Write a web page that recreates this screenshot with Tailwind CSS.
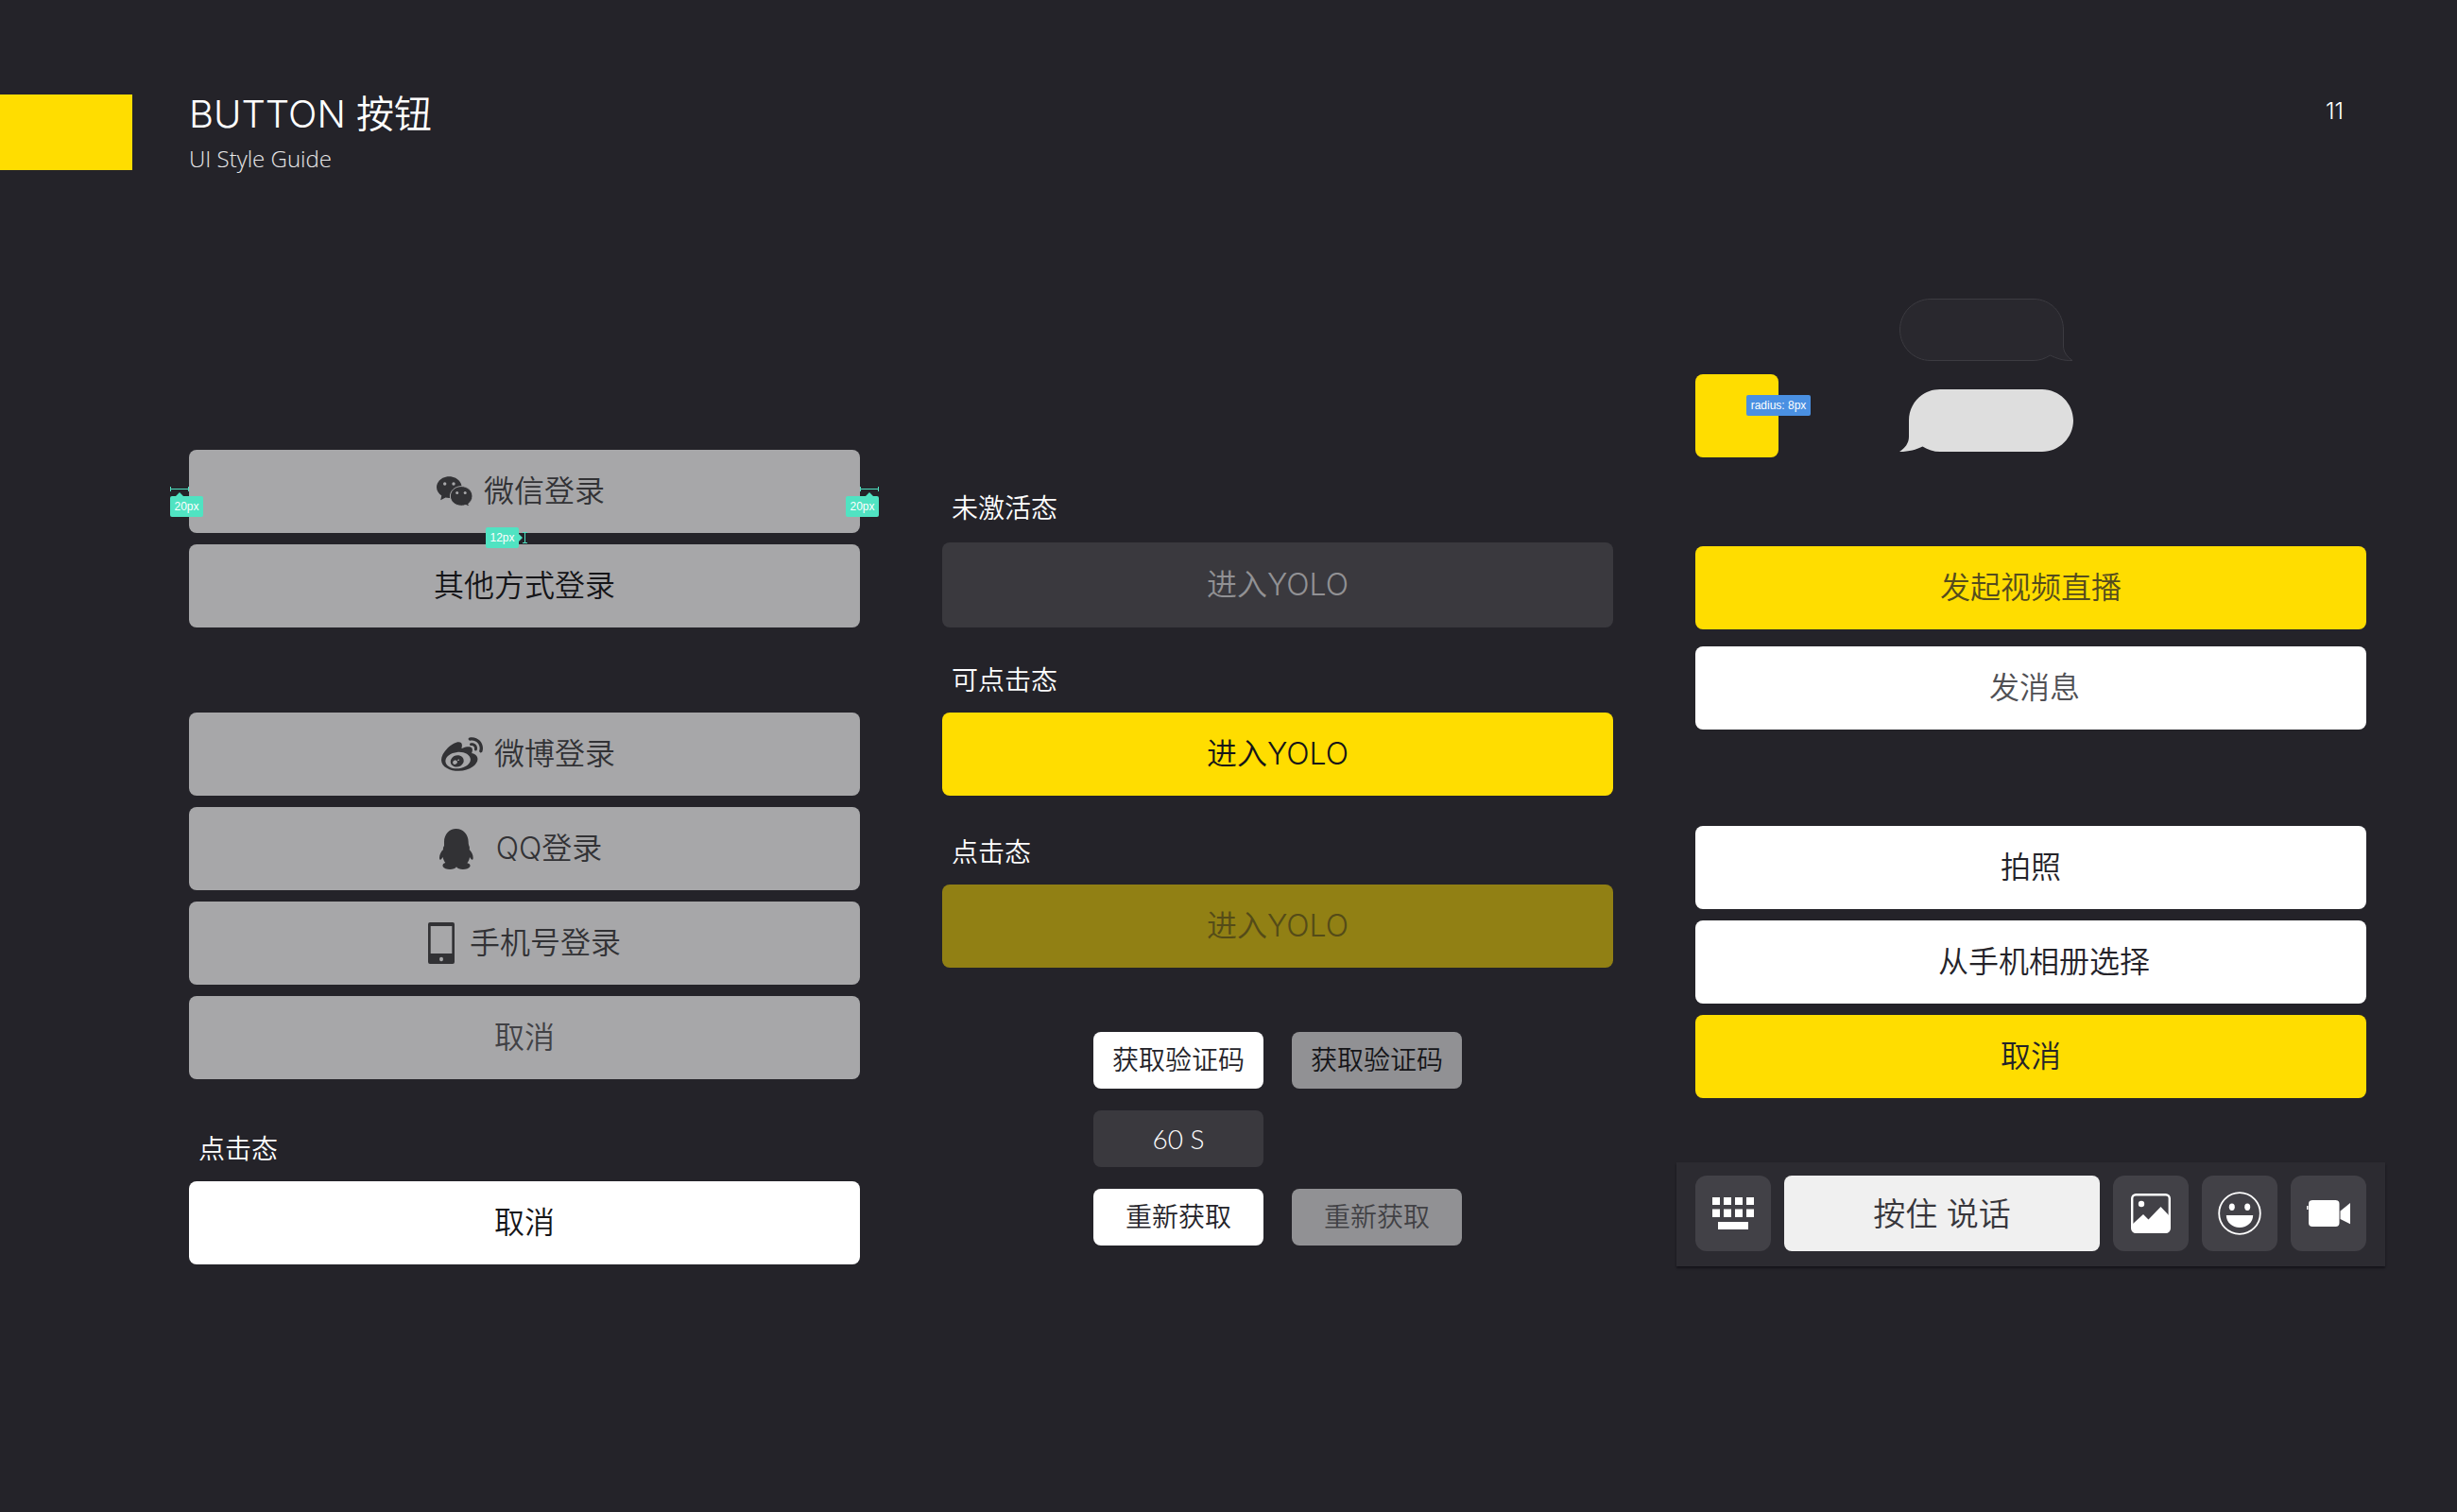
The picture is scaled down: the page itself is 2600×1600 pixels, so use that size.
<!DOCTYPE html>
<html lang="zh-CN">
<head>
<meta charset="utf-8">
<meta name="viewport" content="width=device-width, initial-scale=1">
<title>BUTTON 按钮 - UI Style Guide</title>
<script src="https://cdn.jsdelivr.net/npm/@tailwindcss/browser@4"></script>
</head>
<body class="min-h-screen bg-[#242329] font-['Inter','Noto_Sans_CJK_SC',sans-serif] font-[350] text-white">

<header class="flex items-start pt-[100px]">
  <div class="h-20 w-[140px] bg-[#ffdd00]"></div>
  <div class="ml-[60px]">
    <h1 class="text-[40px] leading-[42px]">BUTTON 按钮</h1>
    <p class="mt-[14px] font-['Open_Sans',sans-serif] text-2xl leading-6 font-light text-white/90">UI Style Guide</p>
  </div>
  <span class="mr-[120px] ml-auto text-2xl leading-9">11</span>
</header>

<main class="mt-[136px] grid grid-cols-3 items-start gap-x-[87px] pr-24 pl-[200px]">

  <!-- Login buttons -->
  <section class="pt-40 text-[32px] text-[#323235]">
    <div class="relative flex flex-col gap-3">
      <button class="flex h-[88px] w-full items-center justify-center gap-3 rounded-lg bg-[#a7a7a9] pr-2">
        <svg class="h-8 w-[38px]" viewBox="0 0 38 32" fill="currentColor" aria-hidden="true">
          <path d="M13.3 .2C20.6 .2 26.6 5.3 26.6 11.6S20.6 23 13.3 23c-1.3 0-2.600-.2-3.800-.5L4.200 25.200 5.300 20.600C2.100 18.500 0 15.300 0 11.600 0 5.300 6 .2 13.300.2z"/>
          <path d="M26.200 10.600c6.500 0 11.800 4.700 11.800 10.400 0 3.300-1.700 6.100-4.300 8l1 3-3.900-1.500c-1.400.5-3 .8-4.600.8-6.500 0-11.800-4.600-11.800-10.300s5.300-10.400 11.800-10.400z" stroke="#a7a7a9" stroke-width="1"/>
          <g fill="#a7a7a9"><circle cx="8.700" cy="8" r="1.700"/><circle cx="18" cy="8" r="1.700"/><circle cx="21.700" cy="17.500" r="1.500"/><circle cx="30.200" cy="17.500" r="1.500"/></g>
        </svg>
        微信登录
      </button>
      <button class="h-[88px] w-full rounded-lg bg-[#a7a7a9] text-[#151518]">其他方式登录</button>

      <!-- Spacing annotations -->
      <div class="absolute top-[39px] -left-5 flex w-[35px] flex-col items-start font-['Liberation_Sans',sans-serif] text-xs font-normal text-white">
        <svg class="h-[10px] w-5" viewBox="0 0 20 10" fill="none" stroke="#50e3c2" aria-hidden="true"><path d="M.5 0v5M19.500 0v5M0 2.500h20"/><path d="M6 10l4-4 4 4z" fill="#50e3c2" stroke="none"/></svg>
        <span class="h-[22px] w-full rounded-xs bg-[#50e3c2] text-center leading-[23px]">20px</span>
      </div>
      <div class="absolute top-[39px] -right-5 flex w-[35px] flex-col items-end font-['Liberation_Sans',sans-serif] text-xs font-normal text-white">
        <svg class="h-[10px] w-5" viewBox="0 0 20 10" fill="none" stroke="#50e3c2" aria-hidden="true"><path d="M.5 0v5M19.500 0v5M0 2.500h20"/><path d="M6 10l4-4 4 4z" fill="#50e3c2" stroke="none"/></svg>
        <span class="h-[22px] w-full rounded-xs bg-[#50e3c2] text-center leading-[23px]">20px</span>
      </div>
      <div class="absolute top-[82px] left-[314px] flex items-center font-['Liberation_Sans',sans-serif] text-xs font-normal text-white">
        <span class="h-[22px] w-[35px] rounded-xs bg-[#50e3c2] text-center leading-[23px]">12px</span>
        <svg class="h-3 w-[9px]" viewBox="0 0 9 12" fill="none" stroke="#50e3c2" aria-hidden="true"><path d="M4 .5h5M4 11.500h5M6.500 0v12"/><path d="M0 2l4 4-4 4z" fill="#50e3c2" stroke="none"/></svg>
      </div>
    </div>

    <div class="mt-[90px] flex flex-col gap-3">
      <button class="flex h-[88px] w-full items-center justify-center gap-3 rounded-lg bg-[#a7a7a9] pl-2">
        <svg class="h-9 w-11" viewBox="0 2.200 24 19.600" fill="currentColor" aria-hidden="true">
          <path d="M10.098 20.323c-3.977.391-7.414-1.406-7.672-4.020-.259-2.609 2.759-5.047 6.740-5.441 3.979-.394 7.413 1.404 7.671 4.018.259 2.600-2.759 5.049-6.737 5.439l-.002.004zM9.050 17.219c-.384.616-1.208.884-1.829.602-.612-.279-.793-.991-.406-1.593.379-.595 1.176-.861 1.793-.601.622.263.820.972.442 1.592zm1.270-1.627c-.141.237-.449.353-.689.253-.236-.090-.313-.361-.177-.586.138-.227.436-.346.672-.240.239.090.315.360.180.601l.014-.028zm.176-2.719c-1.893-.493-4.033.450-4.857 2.118-.836 1.704-.026 3.591 1.886 4.210 1.983.640 4.318-.341 5.132-2.179.800-1.793-.201-3.642-2.161-4.149zm7.563-1.224c-.346-.105-.570-.180-.405-.615.375-.977.420-1.804 0-2.404-.781-1.112-2.915-1.053-5.364-.030 0 0-.766.331-.571-.271.376-1.217.315-2.224-.270-2.809-1.338-1.337-4.869.045-7.888 3.080C1.309 10.870 0 13.273 0 15.348c0 3.981 5.099 6.395 10.086 6.395 6.536 0 10.888-3.801 10.888-6.820 0-1.822-1.547-2.854-2.915-3.284v.010zm1.908-5.092c-.766-.856-1.908-1.187-2.960-.962-.436.090-.706.511-.616.932.090.420.511.691.932.602.511-.105 1.067.044 1.442.465.376.421.466.977.316 1.473-.136.406.089.856.510.992.405.119.857-.105.992-.512.330-1.021.120-2.178-.646-3.035l.030.045zm2.418-2.195c-1.576-1.757-3.905-2.419-6.054-1.968-.496.104-.812.587-.706 1.081.104.496.586.813 1.082.707 1.532-.331 3.185.150 4.296 1.383 1.112 1.246 1.429 2.943.947 4.416-.165.480.106 1.007.586 1.157.479.165.991-.104 1.157-.586.675-2.088.241-4.478-1.338-6.235l.030.045z"/>
        </svg>
        微博登录
      </button>
      <button class="flex h-[88px] w-full items-center justify-center gap-6 rounded-lg bg-[#a7a7a9] pr-2">
        <svg class="h-[43px] w-9" viewBox="0 0 108 129" fill="currentColor" aria-hidden="true">
          <path d="M53 0C75 0 92 18 92 42c0 6 1 10 3 14 1 4 1 7 0 10 7 7 12 17 12 26 0 6-3 8-6 5l-5-7c-1 8-4 14-8 19 8 2 11 6 9 11-5 11-37 12-43 1-6 11-38 10-43-1-2-6 1-10 8-12-4-4-7-11-8-18l-5 7c-3 3-6 1-6-5 0-10 5-19 12-26-1-4 0-8 3-12V42C15 18 31 0 53 0z"/>
        </svg>
        QQ登录
      </button>
      <button class="flex h-[88px] w-full items-center justify-center gap-4 rounded-lg bg-[#a7a7a9]">
        <svg class="h-11 w-7" viewBox="0 0 28 44" fill="currentColor" fill-rule="evenodd" aria-hidden="true">
          <path d="M2 0h24a2 2 0 0 1 2 2v40a2 2 0 0 1-2 2H2a2 2 0 0 1-2-2V2a2 2 0 0 1 2-2zM2.700 4v29h22.600V4zM14 36.800a2 2.200 0 1 0 0 4.400 2 2.200 0 0 0 0-4.400z"/>
        </svg>
        手机号登录
      </button>
      <button class="h-[88px] w-full rounded-lg bg-[#a7a7a9] text-[#414145]">取消</button>
    </div>

    <h2 class="mt-[54px] mb-[14px] pl-[10px] text-[28px] leading-10 text-white">点击态</h2>
    <button class="h-[88px] w-full rounded-lg bg-white text-[#151518]">取消</button>
  </section>

  <!-- Enter button states and verification code -->
  <section class="pt-[202px] text-[32px]">
    <h2 class="mb-4 pl-[10px] text-[28px] leading-10">未激活态</h2>
    <button class="h-[90px] w-full rounded-lg bg-[#3a393e] text-[#919194]">进入YOLO</button>
    <h2 class="mt-9 mb-[14px] pl-[10px] text-[28px] leading-10">可点击态</h2>
    <button class="h-[88px] w-full rounded-lg bg-[#ffdd00] text-[#151518]">进入YOLO</button>
    <h2 class="mt-10 mb-[14px] pl-[10px] text-[28px] leading-10">点击态</h2>
    <button class="h-[88px] w-full rounded-lg bg-[#918014] text-[#544b18]">进入YOLO</button>

    <div class="mt-[68px] grid grid-cols-[180px_180px] justify-center gap-x-[30px] gap-y-[23px] text-[28px] text-[#242329]">
      <button class="h-[60px] rounded-lg bg-white">获取验证码</button>
      <button class="h-[60px] rounded-lg bg-[#919194] text-[#151518]">获取验证码</button>
      <button class="col-span-2 h-[60px] w-[180px] rounded-lg bg-[#3a393e] font-['Lato',sans-serif] font-light text-white">60 S</button>
      <button class="h-[60px] rounded-lg bg-white">重新获取</button>
      <button class="h-[60px] rounded-lg bg-[#919194] text-[#414145]">重新获取</button>
    </div>
  </section>

  <!-- Shapes, action sheet and chat toolbar -->
  <section class="text-[32px] text-[#242329]">
    <div class="flex gap-32">
      <div class="relative mt-20 size-[88px] rounded-lg bg-[#ffdd00]">
        <span class="absolute top-[22px] left-[54px] h-[22px] w-[68px] rounded-xs bg-[#4a90e2] text-center font-['Liberation_Sans',sans-serif] text-xs leading-[23px] font-normal whitespace-nowrap text-white">radius: 8px</span>
      </div>
      <div class="flex flex-col gap-[30px]">
        <svg class="h-[66px] w-[184px]" viewBox="0 0 184 66" aria-hidden="true"><path d="M33 .5H142C160 .5 173.500 15 173.500 33V50C173.500 57 178 62 183 65.500 173 66 166 63 159.500 60 154 63.500 148 65.500 142 65.500H33C15 65.500.5 51 .5 33S15 .5 33 .5z" fill="#29282e" stroke="#3c3b41"/></svg>
        <svg class="h-[66px] w-[184px]" viewBox="0 0 184 66" aria-hidden="true"><path d="M151 0H43C24 0 10 15 10 33V50C10 57 6 62 0 66 11 66 18 63.500 24.500 60.500 30 64 36 66 43 66H151C169 66 184 51 184 33S169 0 151 0z" fill="#dedede"/></svg>
      </div>
    </div>

    <button class="mt-[94px] h-[88px] w-full rounded-lg bg-[#ffdd00] text-[#554c1e]">发起视频直播</button>
    <button class="mt-[18px] h-[88px] w-full rounded-lg bg-white pl-2 text-[#505054]">发消息</button>

    <div class="mt-[102px] flex flex-col gap-3">
      <button class="h-[88px] w-full rounded-lg bg-white">拍照</button>
      <button class="h-[88px] w-full rounded-lg bg-white pl-7">从手机相册选择</button>
      <button class="h-[88px] w-full rounded-lg bg-[#ffdd00]">取消</button>
    </div>

    <div class="-mx-5 mt-[68px] flex gap-[14px] bg-[#2c2b31] px-5 pt-[14px] pb-4 text-white shadow-[0_2px_2px_#15141a]">
      <button class="flex size-20 items-center justify-center rounded-xl bg-[#424147]" aria-label="键盘">
        <svg class="h-[34px] w-11" viewBox="0 0 44 34" fill="currentColor" aria-hidden="true"><path d="M0 0h8v8H0zM12 0h8v8h-8zM24 0h8v8h-8zM36 0h8v8h-8zM0 12.500h8v8.500H0zM12 12.500h8v8.500h-8zM24 12.500h8v8.500h-8zM36 12.500h8v8.500h-8zM6 26h32v8H6z"/></svg>
      </button>
      <button class="h-20 flex-1 rounded-lg bg-[#f0f0f0] text-[34px] text-[#38373c]">按住 说话</button>
      <button class="flex size-20 items-center justify-center rounded-xl bg-[#424147]" aria-label="图片">
        <svg class="size-[42px]" viewBox="0 0 42 42" fill="currentColor" aria-hidden="true"><rect x="1.200" y="1.200" width="39.600" height="39.600" rx="4" fill="none" stroke="currentColor" stroke-width="2.400"/><circle cx="11" cy="11" r="3.200"/><path d="M2 32l11-10 5.500 5.500L31.500 14 40 23v15a2 2 0 0 1-2 2H4a2 2 0 0 1-2-2z"/></svg>
      </button>
      <button class="flex size-20 items-center justify-center rounded-xl bg-[#424147]" aria-label="表情">
        <svg class="size-[46px]" viewBox="0 0 46 46" fill="currentColor" aria-hidden="true"><circle cx="23" cy="23" r="21.800" fill="none" stroke="currentColor" stroke-width="1.800"/><ellipse cx="14.800" cy="16.300" rx="3" ry="3.700"/><ellipse cx="31.200" cy="16.300" rx="3" ry="3.700"/><path d="M8.800 25h28.400C37 32.500 31 38 23 38S9 32.500 8.800 25z"/></svg>
      </button>
      <button class="flex size-20 items-center justify-center rounded-xl bg-[#424147]" aria-label="视频">
        <svg class="h-7 w-[46px]" viewBox="0 0 46 28" fill="currentColor" aria-hidden="true"><rect x="2" width="32.500" height="28" rx="4"/><rect y="6" width="1.500" height="4"/><path d="M35.500 11.500L46 3v22.300L35.500 20z"/></svg>
      </button>
    </div>
  </section>
</main>

</body>
</html>
